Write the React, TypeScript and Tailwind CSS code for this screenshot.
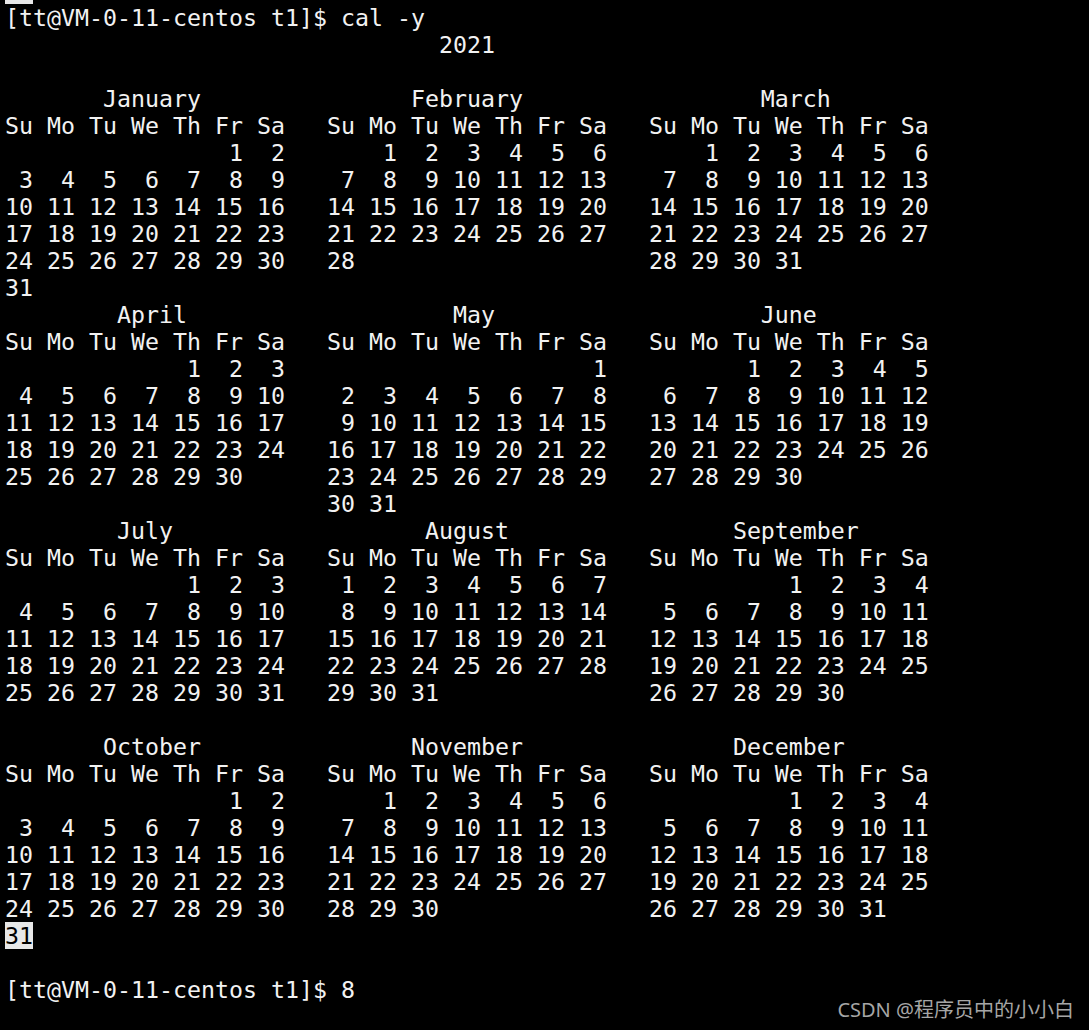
const MONTHS = ['January', 'February', 'March', 'April', 'May', 'June', 'July', 'August', 'September', 'October', 'November', 'December'];
const YEAR = 2021;
const TODAY = { m: 9, d: 31 };

type Seg = { text: string; hl?: boolean };

const pad = (s: string, n: number) => s + ' '.repeat(Math.max(0, n - s.length));

function monthWeeks(m: number): (number | null)[][] {
  const first = new Date(YEAR, m, 1).getDay();
  const days = new Date(YEAR, m + 1, 0).getDate();
  const weeks: (number | null)[][] = [];
  let day = 1 - first;
  for (let w = 0; w < 6; w++) {
    const row: (number | null)[] = [];
    for (let i = 0; i < 7; i++, day++) row.push(day >= 1 && day <= days ? day : null);
    weeks.push(row);
  }
  return weeks;
}

function buildLines(): Seg[][] {
  const lines: Seg[][] = [];
  lines.push([{ text: '[tt@VM-0-11-centos t1]$ cal -y' }]);
  lines.push([{ text: ' '.repeat(31) + '2021' }]);
  lines.push([{ text: '' }]);
  for (let q = 0; q < 4; q++) {
    const ms = [q * 3, q * 3 + 1, q * 3 + 2];
    // month titles, centred in a 20-col block
    let title = '';
    ms.forEach((m, i) => {
      const name = MONTHS[m];
      const off = Math.ceil((20 - name.length) / 2);
      title = pad(title, i * 23 + off) + name;
    });
    lines.push([{ text: title }]);
    lines.push([{ text: ['Su Mo Tu We Th Fr Sa', 'Su Mo Tu We Th Fr Sa', 'Su Mo Tu We Th Fr Sa'].join('   ') }]);
    const grids = ms.map(monthWeeks);
    for (let w = 0; w < 6; w++) {
      const segs: Seg[] = [];
      let cur = '';
      let col = 0;
      ms.forEach((m, i) => {
        grids[i][w].forEach((d, k) => {
          if (d === null) return;
          const start = i * 23 + k * 3;
          const s = d < 10 ? ' ' + d : String(d);
          cur += ' '.repeat(start - col);
          if (m === TODAY.m && d === TODAY.d) {
            segs.push({ text: cur });
            segs.push({ text: s, hl: true });
            cur = '';
          } else {
            cur += s;
          }
          col = start + 2;
        });
      });
      segs.push({ text: cur });
      lines.push(segs);
    }
  }
  lines.push([{ text: '' }]);
  lines.push([{ text: '[tt@VM-0-11-centos t1]$ 8' }]);
  return lines;
}

export default function App() {
  const lines = buildLines();
  return (
    <div className="relative w-[1089px] h-[1030px] bg-black overflow-hidden">
      <div className="h-[3.5px] w-[28px] ml-[5px] bg-[#e8e8e8]" />
      <div
        className="pl-[5px] text-[#f2f2f2] text-[23.25px] leading-[27px] whitespace-pre"
        style={{ fontFamily: '"DejaVu Sans Mono", monospace' }}
      >
        {lines.map((segs, i) => (
          <div key={i} className="h-[27px]">
            {segs.map((s, j) =>
              s.hl ? (
                <span key={j} className="bg-[#e8e8e8] text-black inline-block h-[27px]">{s.text}</span>
              ) : (
                <span key={j}>{s.text}</span>
              )
            )}
          </div>
        ))}
      </div>
      <div
        className="absolute right-[15px] bottom-[6px] text-[20px] leading-[28px] text-[#a6a6a6]"
        style={{ fontFamily: '"Noto Sans", "Noto Sans CJK SC", sans-serif' }}
      >
        CSDN @程序员中的小小白
      </div>
    </div>
  );
}
